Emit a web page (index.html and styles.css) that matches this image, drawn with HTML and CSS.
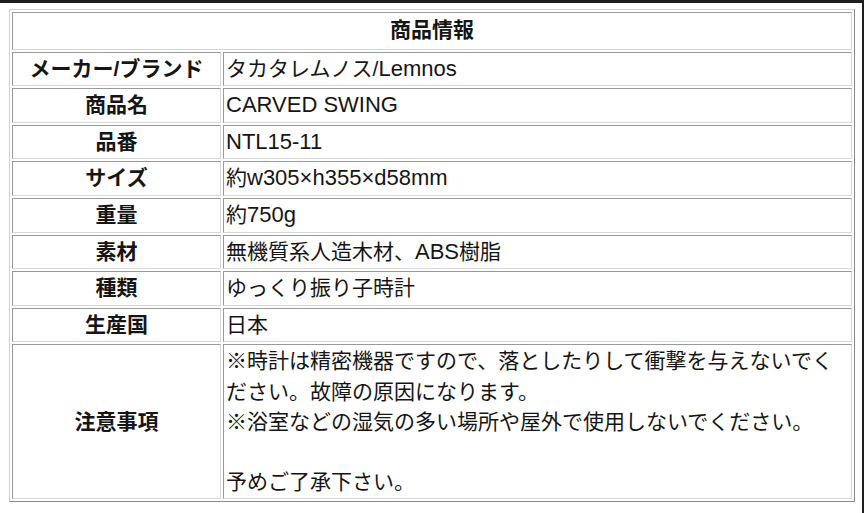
FILE: index.html
```html
<!DOCTYPE html>
<html lang="ja">
<head>
<meta charset="utf-8">
<title>商品情報</title>
<link rel="stylesheet" href="styles.css">
</head>
<body>
<table class="spec">
  <tr><th class="head" colspan="2">商品情報</th></tr>
  <tr><th class="label">メーカー/ブランド</th><td class="value">タカタレムノス/<span class="en">Lemnos</span></td></tr>
  <tr><th class="label">商品名</th><td class="value"><span class="en">CARVED SWING</span></td></tr>
  <tr><th class="label">品番</th><td class="value"><span class="en">NTL15-11</span></td></tr>
  <tr><th class="label">サイズ</th><td class="value">約<span class="en">w305×h355×d58mm</span></td></tr>
  <tr><th class="label">重量</th><td class="value">約<span class="en">750g</span></td></tr>
  <tr><th class="label">素材</th><td class="value">無機質系人造木材、<span class="en">ABS</span>樹脂</td></tr>
  <tr><th class="label">種類</th><td class="value">ゆっくり振り子時計</td></tr>
  <tr><th class="label">生産国</th><td class="value">日本</td></tr>
  <tr><th class="label">注意事項</th><td class="value notes">※時計は精密機器ですので、落としたりして衝撃を与えないでください。故障の原因になります。<br>※浴室などの湿気の多い場所や屋外で使用しないでください。<br><br>予めご了承下さい。</td></tr>
</table>
</body>
</html>
```
FILE: styles.css
```css
html {
  background: #fff;
  border-top: 3px solid #1e1e1e;
  border-right: 2px solid #1e1e1e;
  height: 100%;
  box-sizing: border-box;
}
body {
  margin: 6px 0 0 9px;
  font-family: "Liberation Sans", "Noto Sans CJK JP", sans-serif;
  font-size: 21px;
  color: #151515;
}
.spec {
  width: 846px;
  border: 1px solid #a8a8a8;
  border-color: #d0d0d0 #8a8a8a #8a8a8a #d0d0d0;
  border-spacing: 2px;
  border-collapse: separate;
}
.spec th,
.spec td {
  border: 1px solid #a0a0a0;
  border-color: #9a9a9a #d8d8d8 #d8d8d8 #9a9a9a;
  padding: 1px 2px;
  line-height: 30.6px;
}
.head {
  font-weight: bold;
  text-align: center;
}
.spec .head {
  padding-top: 2px;
  padding-bottom: 3px;
}
.label {
  width: 203px;
  font-weight: bold;
  text-align: center;
  vertical-align: middle;
}
.value {
  text-align: left;
  vertical-align: middle;
  font-weight: normal;
}
.spec .notes {
  line-height: 30.2px;
}
.en {
  font-size: 22px;
}
```
